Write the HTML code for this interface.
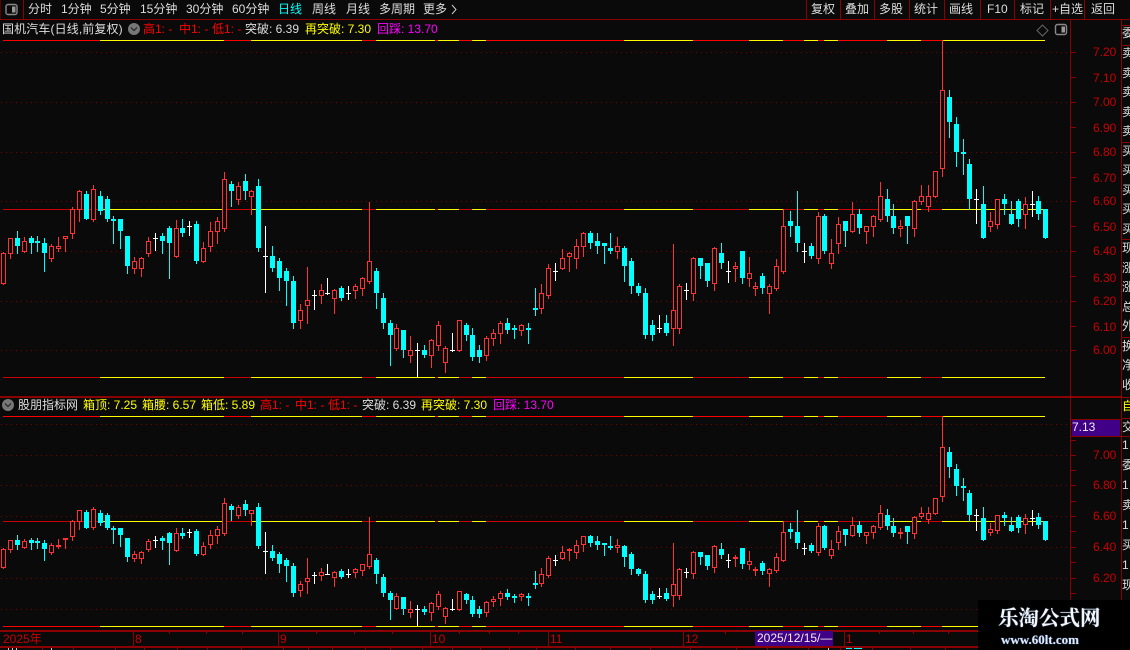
<!DOCTYPE html>
<html lang="zh">
<head>
<meta charset="utf-8">
<title>K线图</title>
<style>
html,body{margin:0;padding:0;background:#0a0a0a;}
#app{position:relative;width:1130px;height:650px;overflow:hidden;background:#0a0a0a;font:12px/14px "Liberation Sans","WenQuanYi Zen Hei","Noto Sans CJK SC",sans-serif;color:#ddd;}
#app span{position:absolute;white-space:nowrap;}
svg{position:absolute;left:0;top:0;}
.t{top:2px;color:#ddd;}
.a{color:#c80000;left:1093px;}
.l1{top:22px;}
.l2{top:398px;}
.r{color:#f00;}.y{color:#ff0;}.w{color:#ddd;}.m{color:#f0f;}
.x{top:632px;color:#c80000;}
.c{left:1122px;color:#ddd;}
#logo{position:absolute;left:978px;top:600px;width:152px;height:50px;background:#000;}
</style>
</head>
<body>
<div id="app">
<svg id="s" width="1130" height="650" shape-rendering="crispEdges"></svg>

<span class="t" style="left:28px">分时</span>
<span class="t" style="left:61px">1分钟</span>
<span class="t" style="left:100px">5分钟</span>
<span class="t" style="left:140px">15分钟</span>
<span class="t" style="left:186px">30分钟</span>
<span class="t" style="left:232px">60分钟</span>
<span class="t" style="left:278px;color:#0ff">日线</span>
<span class="t" style="left:312px">周线</span>
<span class="t" style="left:346px">月线</span>
<span class="t" style="left:379px">多周期</span>
<span class="t" style="left:423px">更多</span>
<span class="t" style="left:811px">复权</span>
<span class="t" style="left:845px">叠加</span>
<span class="t" style="left:879px">多股</span>
<span class="t" style="left:914px">统计</span>
<span class="t" style="left:949px">画线</span>
<span class="t" style="left:987px">F10</span>
<span class="t" style="left:1020px">标记</span>
<span class="t" style="left:1052px">+自选</span>
<span class="t" style="left:1091px">返回</span>

<span class="l1 w" style="left:2px;letter-spacing:.12px">国机汽车(日线,前复权)</span>
<span class="l1 r" style="left:143px">高1: -</span>
<span class="l1 r" style="left:179px">中1: -</span>
<span class="l1 r" style="left:212px">低1: -</span>
<span class="l1 w" style="left:245px">突破: 6.39</span>
<span class="l1 y" style="left:305px">再突破: 7.30</span>
<span class="l1 m" style="left:377px">回踩: 13.70</span>

<span class="l2 w" style="left:18px">股朋指标网</span>
<span class="l2 y" style="left:83px">箱顶: 7.25</span>
<span class="l2 y" style="left:142px">箱腰: 6.57</span>
<span class="l2 y" style="left:201px">箱低: 5.89</span>
<span class="l2 r" style="left:260px">高1: -</span>
<span class="l2 r" style="left:295px">中1: -</span>
<span class="l2 r" style="left:328px">低1: -</span>
<span class="l2 w" style="left:362px">突破: 6.39</span>
<span class="l2 y" style="left:421px">再突破: 7.30</span>
<span class="l2 m" style="left:493px">回踩: 13.70</span>

<span class="a" style="top:45px">7.20</span>
<span class="a" style="top:71px">7.10</span>
<span class="a" style="top:95px">7.00</span>
<span class="a" style="top:121px">6.90</span>
<span class="a" style="top:145px">6.80</span>
<span class="a" style="top:171px">6.70</span>
<span class="a" style="top:194px">6.60</span>
<span class="a" style="top:220px">6.50</span>
<span class="a" style="top:244px">6.40</span>
<span class="a" style="top:271px">6.30</span>
<span class="a" style="top:294px">6.20</span>
<span class="a" style="top:320px">6.10</span>
<span class="a" style="top:343px">6.00</span>

<span style="left:1072px;top:420px;width:48px;height:16px;background:#400088;color:#eee;line-height:15px">7.13</span>
<span class="a" style="top:448px">7.00</span>
<span class="a" style="top:478px">6.80</span>
<span class="a" style="top:509px">6.60</span>
<span class="a" style="top:540px">6.40</span>
<span class="a" style="top:571px">6.20</span>

<span class="x" style="left:3px">2025年</span>
<span class="x" style="left:135px">8</span>
<span class="x" style="left:280px">9</span>
<span class="x" style="left:432px">10</span>
<span class="x" style="left:550px">11</span>
<span class="x" style="left:685px">12</span>
<span style="left:755px;top:631px;width:78px;height:15px;background:#400088;color:#eee;line-height:15px;text-indent:2px">2025/12/15/—</span>
<span class="x" style="left:846px">1</span>

<span class="c" style="top:26px">委</span>
<span class="c" style="top:46px">卖</span>
<span class="c" style="top:66px">卖</span>
<span class="c" style="top:85px">卖</span>
<span class="c" style="top:105px">卖</span>
<span class="c" style="top:124px">卖</span>
<span class="c" style="top:144px">买</span>
<span class="c" style="top:163px">买</span>
<span class="c" style="top:183px">买</span>
<span class="c" style="top:202px">买</span>
<span class="c" style="top:222px">买</span>
<span class="c" style="top:241px">现</span>
<span class="c" style="top:261px">涨</span>
<span class="c" style="top:280px">涨</span>
<span class="c" style="top:300px">总</span>
<span class="c" style="top:319px">外</span>
<span class="c" style="top:339px">换</span>
<span class="c" style="top:358px">净</span>
<span class="c" style="top:378px">收</span>
<span class="c" style="top:399px;color:#ff0">自</span>
<span class="c" style="top:420px">交</span>
<span class="c" style="top:438px">1</span>
<span class="c" style="top:458px">委</span>
<span class="c" style="top:478px">1</span>
<span class="c" style="top:498px">卖</span>
<span class="c" style="top:518px">1</span>
<span class="c" style="top:538px">买</span>
<span class="c" style="top:558px">1</span>
<span class="c" style="top:578px">现</span>

<div id="logo"></div>
<span style="left:998px;top:607px;font:bold 20.5px/24px 'Liberation Serif','Noto Serif CJK SC',serif;color:#f4f6fa;text-shadow:0 0 1px #7fa8e0">乐淘公式网</span>
<span style="left:1001px;top:632px;font:bold 13px/16px 'Liberation Serif',serif;color:#dfe9fa;text-shadow:0 0 1px #5f90e0">www.60lt.com</span>
</div>

<script>
var D=[
[252,253,284,284,0],[238,238,254,258,0],[231,238,246,253,1],[237,241,252,252,0],[236,238,243,253,1],[236,241,243,251,1],[238,243,253,271,1],[244,246,259,261,0],
[237,246,249,251,0],[236,236,239,251,0],[207,209,234,238,0],[190,191,210,221,0],[191,194,219,219,1],[185,189,220,221,0],[191,196,211,214,1],[196,199,219,221,1],
[216,219,221,243,1],[219,219,231,248,1],[236,236,266,273,1],[257,261,269,273,0],[257,258,269,276,0],[237,241,254,256,0],[233,238,239,251,2],[233,236,241,253,1],
[226,228,243,278,1],[220,228,257,257,0],[219,228,233,236,1],[221,226,227,236,2],[221,224,261,263,1],[242,248,262,262,0],[222,231,247,251,0],[217,221,232,243,0],
[172,179,229,231,0],[181,184,191,206,1],[182,186,200,204,0],[174,181,191,199,1],[190,191,197,214,0],[179,186,248,251,1],[226,256,257,293,2],[246,256,268,271,1],
[258,261,278,290,1],[268,271,281,305,1],[276,281,323,328,1],[304,310,321,328,0],[267,300,306,323,0],[290,295,296,310,2],[284,290,296,303,0],[278,293,294,295,2],
[289,290,299,313,0],[286,288,298,300,1],[286,293,294,300,2],[284,286,291,298,0],[277,278,289,295,0],[202,261,282,283,0],[268,271,293,308,1],[293,298,323,328,1],
[320,323,335,365,1],[324,328,349,350,0],[330,330,350,357,1],[336,350,356,362,0],[343,350,351,377,2],[345,350,355,357,1],[339,340,356,367,0],[321,325,346,350,0],
[346,348,363,372,0],[333,350,351,352,2],[320,320,351,351,0],[323,325,335,340,1],[328,335,357,360,1],[345,350,357,362,1],[336,338,356,360,0],[329,333,339,345,0],
[321,323,334,343,0],[318,323,330,333,1],[325,328,330,338,1],[324,325,331,335,0],[323,328,330,343,1],[288,308,310,315,1],[284,293,309,313,0],[264,268,296,298,0],
[263,271,272,281,2],[249,258,269,269,0],[252,253,257,271,0],[239,246,259,268,0],[232,233,247,256,0],[231,233,243,248,1],[233,241,246,253,1],[243,243,246,263,1],
[233,248,251,253,1],[237,246,252,258,0],[246,248,266,281,1],[258,261,286,293,1],[283,286,293,295,1],[288,293,335,338,1],[320,325,335,340,1],[315,328,329,333,2],
[315,323,333,335,1],[244,310,329,345,0],[284,286,329,333,0],[283,290,291,300,2],[257,258,294,300,0],[258,258,266,278,1],[263,263,281,286,1],[247,248,284,290,0],
[243,253,263,268,1],[261,271,272,283,2],[262,266,269,281,0],[251,251,278,283,1],[257,273,279,286,0],[282,286,289,295,0],[273,276,288,293,1],[284,286,294,313,0],
[259,266,289,290,0],[209,226,272,273,0],[211,221,226,236,1],[191,226,243,251,1],[243,251,252,263,2],[243,246,256,258,1],[212,216,259,263,0],[214,216,251,253,1],
[239,253,264,268,0],[217,224,244,253,0],[221,221,231,246,1],[202,214,232,232,0],[209,214,228,233,1],[226,226,232,243,0],[215,216,227,236,0],[182,196,220,221,0],
[189,199,216,221,1],[204,216,228,233,1],[220,226,229,236,0],[216,216,226,243,1],[200,201,229,236,0],[185,196,202,204,0],[185,196,207,211,0],[171,171,197,197,0],
[40,90,169,176,0],[90,97,122,137,1],[117,124,152,166,1],[139,152,154,174,1],[159,164,199,209,1],[189,199,200,224,2],[186,204,238,238,1],[212,221,227,231,0],
[199,199,225,228,0],[194,199,204,214,1],[201,214,224,224,1],[199,201,219,226,1],[197,204,215,228,0],[191,204,205,217,2],[196,201,214,219,1],[209,209,238,238,1]
];
var BG="#0a0a0a",RD="#ff3232",CY="#00ffff",WH="#ffffff",LINE="#8b0000";
var SIX={4:1,15:1,25:1,35:1,46:1,56:1,67:1,77:1,87:1,97:1,108:1,118:1,128:1,139:1,149:1};
var PX=[3];
for(var n=0;n<151;n++){PX.push(PX[n]+(SIX[n]?6:7));}
var o=[];
function R(x,y,w,h,c){o.push('<rect x="'+x+'" y="'+y+'" width="'+w+'" height="'+h+'" fill="'+c+'"/>');}
function dots(y){o.push('<line x1="1" y1="'+(y+.5)+'" x2="1070" y2="'+(y+.5)+'" stroke="#7a0000" stroke-width="1" stroke-dasharray="1 4"/>');}
[52,102,152,201,251,301,350].forEach(dots);
[424,455,485,516,547,578,609].forEach(dots);
var B=[3,100,224,251,362,376,435,438,459,472,486,624,693,749,783,804,818,824,838,887,921,942,1045];
function seg(y,red,end){
  for(var i=0;i<B.length-1;i++){
    var a=B[i],b=Math.min(B[i+1],end);
    if(b>a) R(a,y,b-a,1,i%2==0?red:"#ffff00");
  }
}
seg(40,"#ff0000",1045);seg(209,"#c80000",1045);seg(377,"#c80000",1045);
seg(416,"#ff0000",1045);seg(521,"#c80000",1045);seg(626,"#ff0000",978);
function mapTop(y){return Math.round(y);}
function mapBot(y){return Math.round(416.2+(y-40)*0.623);}
function candles(map){
  D.forEach(function(d,i){
    var p=PX[i],h=map(d[0]),t=map(d[1]),b=map(d[2]),l=map(d[3]),k=d[4];
    var c=k==0?RD:k==1?CY:WH;
    if(l>h) R(p,h,1,l-h+(k==2?0:1),c);
    if(k==2){R(p-2,t,5,1,c);return;}
    var H=Math.max(b-t,2);
    if(k==1){R(p-2,t,5,H,c);}
    else{
      o.push('<rect x="'+(p-1.5)+'" y="'+(t+.5)+'" width="4" height="'+(H-1)+'" fill="'+BG+'" stroke="'+c+'" stroke-width="1"/>');
    }
  });
}
candles(mapTop);candles(mapBot);
R(0,19,1130,1,LINE);R(23,0,1,19,LINE);R(0,0,1,19,"#5a0000");
[806,840,874,909,944,980,1014,1050,1084].forEach(function(x){R(x,0,1,19,LINE);});
R(1070,20,1,610,LINE);R(1121,20,1,626,LINE);
R(0,396,1121,2,LINE);
R(1071,419,50,1,LINE);R(1071,436,50,1,LINE);
R(0,630,978,2,LINE);R(0,646,978,2,LINE);
[25,45,142,239,337,397,418,436].forEach(function(y){R(1121,y,9,1,LINE);});
[52,77,102,127,152,177,201,226,251,276,301,326,350].forEach(function(y){R(1071,y,5,1,LINE);});
[424,440,455,470,485,501,516,531,547,562,578,593].forEach(function(y){R(1071,y,5,1,LINE);});
[133,278,430,548,683,844].forEach(function(x){R(x,632,1,14,LINE);});
[169,206,242,316,354,392,459,489,518,725,879,913,948].forEach(function(x){R(x,632,1,2,LINE);});
R(755,631,78,1,"#600060");
[42,73,115,144,177,207,241,283,308,332,365,390,422,452,480,509,536,575,610,650,690,736,767,808,840,872,910,945].forEach(function(x){R(x,647,1,3,LINE);});
R(8,648,1,2,"#ccc");R(12,648,1,2,"#ccc");R(16,648,1,2,"#ccc");R(51,648,1,2,"#ccc");
R(828,648,1,2,"#ccc");R(846,648,6,1,"#0ff");R(854,648,8,1,"#0ff");
o.push('<g shape-rendering="geometricPrecision">');
o.push('<path d="M1042.5 25 L1048 30.5 L1042.5 36 L1037 30.5 Z" fill="none" stroke="#666" stroke-width="1"/>');
function box(x,y){
  o.push('<rect x="'+x+'" y="'+y+'" width="11" height="10" rx="2" fill="none" stroke="#888" stroke-width="1.4"/>');
  o.push('<rect x="'+(x+6)+'" y="'+(y+2)+'" width="3.5" height="6" fill="#999"/>');
}
box(6,4.5);box(1055.5,24.5);
function chev(cx,cy){
  o.push('<circle cx="'+cx+'" cy="'+cy+'" r="6" fill="#777"/>');
  o.push('<path d="M'+(cx-3)+' '+(cy-1.5)+' L'+cx+' '+(cy+1.5)+' L'+(cx+3)+' '+(cy-1.5)+'" fill="none" stroke="#222" stroke-width="1.2"/>');
}
chev(134,29);chev(8,405);
o.push('<path d="M452 5 L456 9.5 L452 14" fill="none" stroke="#ccc" stroke-width="1"/>');
o.push('</g>');
document.getElementById('s').innerHTML=o.join('');
</script>
</body>
</html>
